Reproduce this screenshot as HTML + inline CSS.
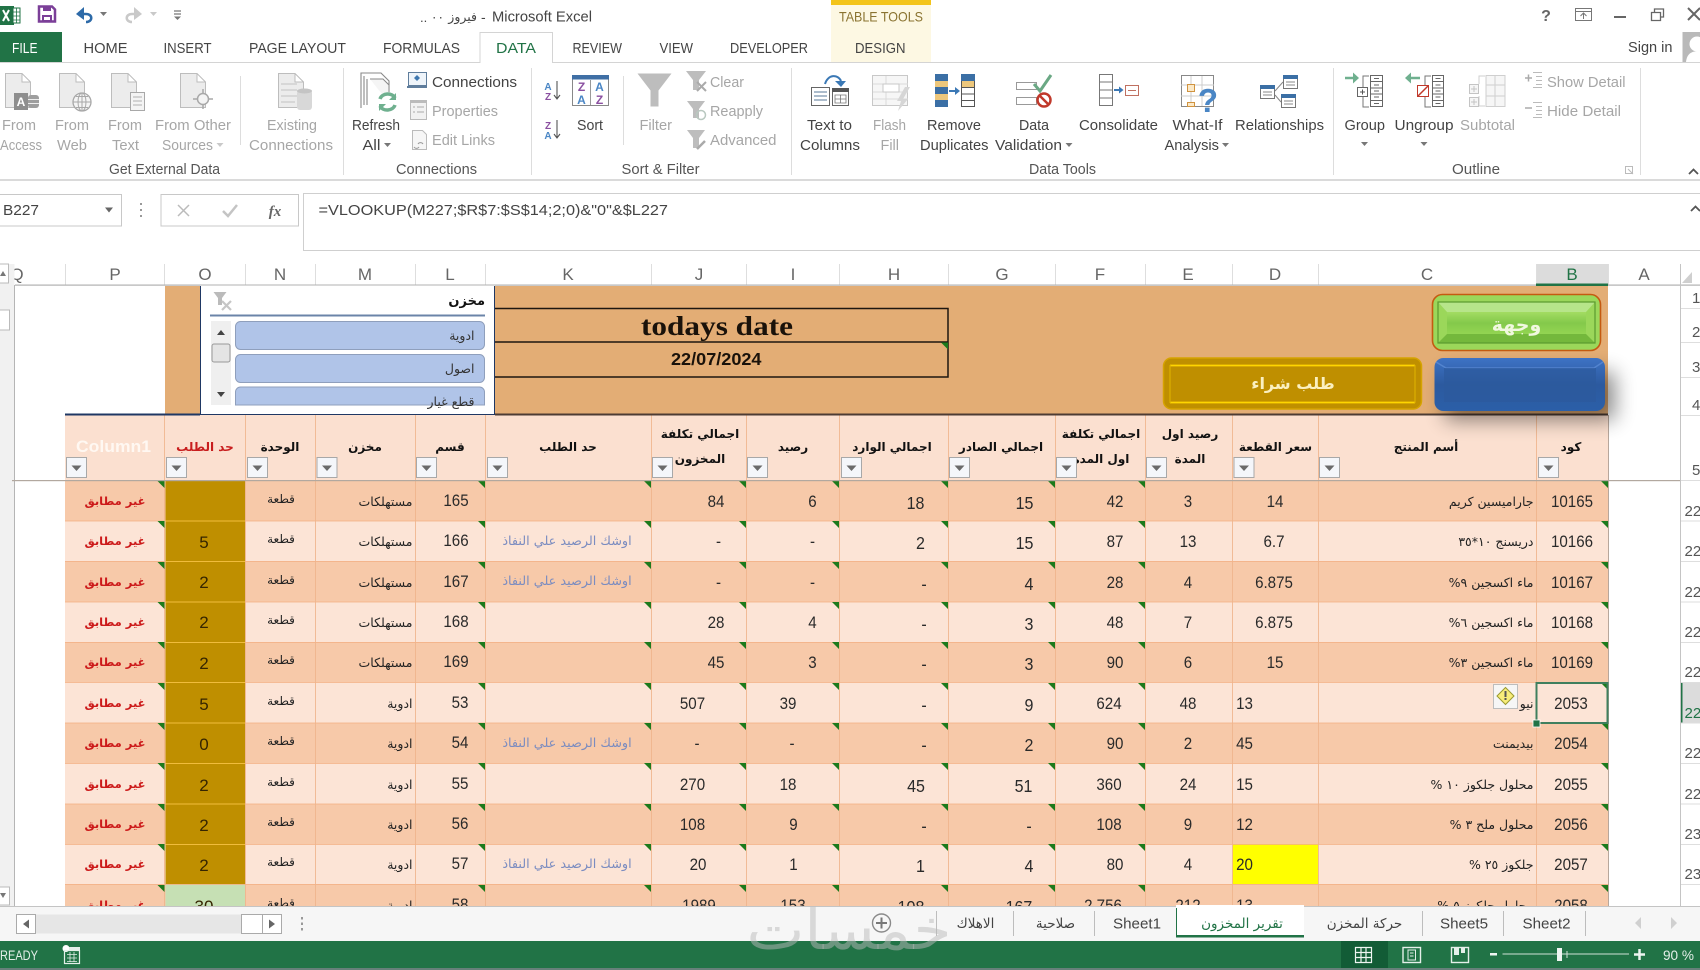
<!DOCTYPE html>
<html><head><meta charset="utf-8"><title>Microsoft Excel</title>
<style>
html,body{margin:0;padding:0;background:#fff;width:1700px;height:970px;overflow:hidden}
svg{display:block;filter:blur(.3px)}
text{font-family:"Liberation Sans","DejaVu Sans",sans-serif;white-space:pre}
.r{font-size:14.5px;fill:#444}
.g{font-size:14.5px;fill:#a6a6a6}
.t{font-size:15px;fill:#444}
.c{font-size:17px;fill:#666;text-anchor:middle}
.n{font-size:17px;fill:#2a2a2a;text-anchor:middle;transform:scaleX(.89);transform-box:fill-box;transform-origin:center}
.b{font-size:18px;fill:#2a2a2a;text-anchor:middle;transform:scaleX(.89);transform-box:fill-box;transform-origin:center}
.o{font-size:17px;fill:#352500;text-anchor:middle}
.a{font-family:"DejaVu Sans",sans-serif;font-size:12.5px;fill:#222;direction:rtl;text-anchor:start}
.m{font-family:"DejaVu Sans",sans-serif;font-size:12px;fill:#222;text-anchor:middle}
.h{font-family:"DejaVu Sans",sans-serif;font-size:12px;font-weight:bold;fill:#111;text-anchor:middle}
.w{font-family:"DejaVu Sans",sans-serif;font-size:11.5px;font-weight:bold;fill:#cc1a1a;text-anchor:middle}
.k{font-family:"DejaVu Sans",sans-serif;font-size:12.8px;fill:#7b8cc0;text-anchor:middle}
.q{font-size:15px;fill:#555}
</style></head><body>
<svg width="1700" height="970" viewBox="0 0 1700 970" xmlns="http://www.w3.org/2000/svg">
<defs>
<path id="pg" d="M.5.5H17L25.5 9V34.5H.5ZM17 .5V9H25.5" fill="#ececec" stroke="#bdbdbd"/>
<g id="dd"><rect x=".5" y=".5" width="20" height="20" fill="#f4f6fa" stroke="#a8a8a8"/><path d="M5.5 8.5h10l-5 5.5z" fill="#6a6a6a"/></g>
<path id="tr" d="M157.500 0h7v7zM478 0h7v7zM644 0h7v7zM739 0h7v7zM832 0h7v7zM941 0h7v7zM1048 0h7v7zM1138 0h7v7zM1601 0h7v7z" fill="#1c7a1c"/>
<path id="ar" d="M0 0h7l-3.500 4z" fill="#777"/>
<linearGradient id="bl" x1="0" y1="0" x2="0" y2="1"><stop offset="0" stop-color="#3d72c4"/><stop offset=".5" stop-color="#2c5a9f"/><stop offset="1" stop-color="#2b5fa8"/></linearGradient>
<linearGradient id="gr" x1="0" y1="0" x2="0" y2="1"><stop offset="0" stop-color="#a3dc62"/><stop offset=".5" stop-color="#84c94b"/><stop offset="1" stop-color="#93d552"/></linearGradient>
<filter id="sh" x="-30%" y="-80%" width="160%" height="260%"><feGaussianBlur stdDeviation="10"/></filter>
</defs>
<rect width="1700" height="970" fill="#fff"/>

<!-- title bar -->
<rect x="0" y="6" width="14" height="19" fill="#217346"/>
<path d="M3 10l6 11M9 10l-6 11" stroke="#fff" stroke-width="2"/>
<rect x="13" y="8" width="7" height="15" fill="#fff" stroke="#217346"/>
<path d="M13 12h7M13 16h7M13 20h7M16.500 8v15" stroke="#217346" stroke-width=".8"/>
<path d="M39 6.500h13l3 3v12H39z" fill="#fff" stroke="#7b3f98" stroke-width="2.500"/>
<rect x="43" y="6" width="8" height="5" fill="#7b3f98"/><rect x="42" y="15" width="10" height="6" fill="#7b3f98"/><rect x="44" y="17" width="6" height="3" fill="#fff"/>
<path d="M78 14h8c7 0 7 8 0 8" fill="none" stroke="#2d6aa8" stroke-width="2.500"/><path d="M84 7l-8 7 8 6z" fill="#2d6aa8"/>
<use href="#ar" x="100" y="12"/>
<path d="M140 14h-8c-7 0-7 8 0 8" fill="none" stroke="#c9c9c9" stroke-width="2.500"/><path d="M134 7l8 7-8 6z" fill="#c9c9c9"/>
<use href="#ar" x="150" y="12" opacity=".4"/>
<path d="M174 11h7M174 14h7" stroke="#777" stroke-width="1.200"/><path d="M174 16.500h7l-3.500 3.500z" fill="#777"/>
<text x="420" y="22" font-size="13" fill="#444">..</text>
<text x="437.500" y="21" style="font-family:'DejaVu Sans',sans-serif;font-size:12px;fill:#444;text-anchor:middle">٠٠</text>
<text x="477" y="21" style="font-family:'DejaVu Sans',sans-serif;font-size:12.500px;fill:#444;direction:rtl;text-anchor:start">فيروز</text>
<text x="481" y="22" font-size="14" fill="#444">-</text>
<text x="492" y="21.500" font-size="14.500" fill="#444" textLength="100" lengthAdjust="spacingAndGlyphs">Microsoft Excel</text>
<rect x="831" y="0" width="100" height="62" fill="#fdf8e3"/><rect x="831" y="0" width="100" height="5" fill="#f3c41a"/>
<text x="839" y="21.500" font-size="14" fill="#8a7330" textLength="84" lengthAdjust="spacingAndGlyphs">TABLE TOOLS</text>
<!-- window controls -->
<text x="1546" y="21" font-size="16" font-weight="bold" fill="#666" text-anchor="middle">?</text>
<rect x="1575.500" y="8.500" width="16" height="12" fill="none" stroke="#777"/><path d="M1575 11.500h17M1583.500 19v-6M1580.500 16l3-3 3 3" fill="none" stroke="#777"/>
<rect x="1614" y="16" width="12" height="2" fill="#666"/>
<path d="M1651.500 12.500h9v8h-9zM1654.500 12v-3h9v8h-3" fill="none" stroke="#666" stroke-width="1.300"/>
<path d="M1688 8l12 12M1700 8l-12 12" stroke="#666" stroke-width="2"/>

<!-- tabs -->
<rect x="0" y="32" width="62" height="31" fill="#217346"/>
<text x="12" y="53" font-size="15" fill="#fff" textLength="25.500" lengthAdjust="spacingAndGlyphs">FILE</text>
<path d="M0 62.500H480V32.500H552.500V62.500H1700" fill="none" stroke="#d4d4d4"/>
<text class="t" x="83.500" y="53" textLength="44" lengthAdjust="spacingAndGlyphs">HOME</text>
<text class="t" x="163.500" y="53" textLength="48" lengthAdjust="spacingAndGlyphs">INSERT</text>
<text class="t" x="249" y="53" textLength="97" lengthAdjust="spacingAndGlyphs">PAGE LAYOUT</text>
<text class="t" x="383" y="53" textLength="77" lengthAdjust="spacingAndGlyphs">FORMULAS</text>
<text class="t" x="496" y="53" textLength="40" lengthAdjust="spacingAndGlyphs" style="fill:#217346">DATA</text>
<text class="t" x="572.500" y="53" textLength="49.500" lengthAdjust="spacingAndGlyphs">REVIEW</text>
<text class="t" x="659.500" y="53" textLength="33.500" lengthAdjust="spacingAndGlyphs">VIEW</text>
<text class="t" x="730" y="53" textLength="78" lengthAdjust="spacingAndGlyphs">DEVELOPER</text>
<text class="t" x="855" y="53" textLength="50.500" lengthAdjust="spacingAndGlyphs">DESIGN</text>
<text class="t" x="1628" y="52" textLength="44.500" lengthAdjust="spacingAndGlyphs">Sign in</text>
<rect x="1682.500" y="32" width="18" height="30" fill="#b9b9b9"/><circle cx="1697" cy="44" r="7.500" fill="#fff"/><path d="M1686 62c1-9 6-11 14-11v11z" fill="#fff"/>

<!-- ribbon: external data -->
<use href="#pg" x="5" y="73"/><rect x="14" y="93" width="14" height="17" fill="#8e8e8e"/><text x="21" y="106" font-size="12" font-weight="bold" fill="#fff" text-anchor="middle">A</text><rect x="28" y="95" width="11" height="13" rx="3" fill="#9e9e9e"/><path d="M28 99.500h11M28 103.500h11" stroke="#eee"/>
<use href="#pg" x="59" y="73"/><circle cx="82" cy="102" r="9" fill="#f4f4f4" stroke="#a8a8a8" stroke-width="1.300"/><path d="M73 102h18M82 93v18M76 96.500h12M76 107.500h12" stroke="#a8a8a8" fill="none"/><ellipse cx="82" cy="102" rx="4" ry="9" fill="none" stroke="#a8a8a8"/>
<use href="#pg" x="111" y="73"/><rect x="130.500" y="92.500" width="14" height="18" fill="#f4f4f4" stroke="#a8a8a8"/><path d="M133 97h9M133 101h9M133 105h9" stroke="#b0b0b0"/>
<use href="#pg" x="180" y="73"/><circle cx="203" cy="99" r="5.500" fill="#f4f4f4" stroke="#a8a8a8" stroke-width="1.500"/><path d="M203 89v5M203 104v5M193 99h5M208 99h5" stroke="#a8a8a8" stroke-width="1.500"/>
<text class="g" x="2" y="130" textLength="34" lengthAdjust="spacingAndGlyphs">From</text><text class="g" x="0" y="150" textLength="42" lengthAdjust="spacingAndGlyphs">Access</text>
<text class="g" x="55" y="130" textLength="34" lengthAdjust="spacingAndGlyphs">From</text><text class="g" x="57" y="150" textLength="30" lengthAdjust="spacingAndGlyphs">Web</text>
<text class="g" x="108" y="130" textLength="34" lengthAdjust="spacingAndGlyphs">From</text><text class="g" x="112" y="150" textLength="27" lengthAdjust="spacingAndGlyphs">Text</text>
<text class="g" x="155" y="130" textLength="76" lengthAdjust="spacingAndGlyphs">From Other</text><text class="g" x="162" y="150" textLength="51" lengthAdjust="spacingAndGlyphs">Sources</text><use href="#ar" x="216.500" y="143" opacity=".4"/>
<path d="M240.500 76V145" stroke="#ddd"/>
<use href="#pg" x="278" y="73"/><path d="M281 84h16M281 90h16M281 96h16M281 102h14" stroke="#d0d0d0" stroke-width="1.500"/><rect x="297" y="90" width="15" height="20" rx="3" fill="#d8d8d8"/><ellipse cx="304.500" cy="91" rx="7.500" ry="2.500" fill="#c4c4c4"/>
<text class="g" x="267" y="130" textLength="50" lengthAdjust="spacingAndGlyphs">Existing</text><text class="g" x="249" y="150" textLength="84" lengthAdjust="spacingAndGlyphs">Connections</text>
<text class="r" x="109" y="174" textLength="111" lengthAdjust="spacingAndGlyphs" style="fill:#555">Get External Data</text>
<path d="M343.500 68V175" stroke="#ddd"/>
<!-- connections -->
<path d="M361 108V73h20l8 8v22M364 76v29M367 79v26" fill="none" stroke="#888" stroke-width="1.100"/><path d="M370 79h13l6 6v18" fill="#f5f5f5" stroke="#888"/>
<circle cx="387.500" cy="102" r="10" fill="#fff"/><path d="M380 99c2-6 12-7 15-1M395 105c-2 6-12 7-15 1" fill="none" stroke="#6fb08f" stroke-width="3.500"/><path d="M396 93v7h-7zM379 111v-7h7z" fill="#6fb08f"/>
<text class="r" x="352" y="130" textLength="48" lengthAdjust="spacingAndGlyphs">Refresh</text><text class="r" x="362.500" y="150" textLength="18" lengthAdjust="spacingAndGlyphs">All</text><use href="#ar" x="384" y="143"/>
<rect x="408.500" y="72.500" width="18" height="13" fill="#eef4fa" stroke="#5f7d9c"/><path d="M417 75l3 3-3 3-3-3z" fill="#3f78b0"/><path d="M407 87h20" stroke="#5f7d9c" stroke-width="2"/>
<rect x="410.500" y="100.500" width="16" height="19" fill="#f2f2f2" stroke="#bbb"/><rect x="410" y="100" width="17" height="3" fill="#bbb"/><path d="M413 107h2M417 107h7M413 112h2M417 112h7" stroke="#aaa"/>
<path d="M412.500 130.500h10l4 4v15h-14z" fill="#f6f6f6" stroke="#bbb"/><path d="M418 144a3 3 0 0 1 5 0M414 147a3 3 0 0 0 5 0" fill="none" stroke="#999"/>
<text class="r" x="432" y="87" textLength="85" lengthAdjust="spacingAndGlyphs">Connections</text>
<text class="g" x="432" y="116" textLength="66" lengthAdjust="spacingAndGlyphs">Properties</text>
<text class="g" x="432" y="145" textLength="63" lengthAdjust="spacingAndGlyphs">Edit Links</text>
<text class="r" x="396" y="174" textLength="81" lengthAdjust="spacingAndGlyphs" style="fill:#555">Connections</text>
<path d="M531.500 68V175" stroke="#ddd"/>
<!-- sort -->
<text x="548" y="90" font-size="10" font-weight="bold" fill="#4a86c5" text-anchor="middle">A</text><text x="548" y="100" font-size="10" font-weight="bold" fill="#8a4fa0" text-anchor="middle">Z</text>
<path d="M557 81v18M554 95l3 4 3-4" fill="none" stroke="#555" stroke-width="1.100"/>
<text x="548" y="129" font-size="10" font-weight="bold" fill="#8a4fa0" text-anchor="middle">Z</text><text x="548" y="139" font-size="10" font-weight="bold" fill="#4a86c5" text-anchor="middle">A</text>
<path d="M557 120v18M554 134l3 4 3-4" fill="none" stroke="#555" stroke-width="1.100"/>
<rect x="572.500" y="75.500" width="36" height="30" fill="#fff" stroke="#888"/><rect x="572" y="75" width="37" height="4.500" fill="#3f6fa5"/><path d="M590.500 80v25" stroke="#999"/>
<text x="581.500" y="91" font-size="12" font-weight="bold" fill="#8a4fa0" text-anchor="middle">Z</text><text x="581.500" y="104" font-size="12" font-weight="bold" fill="#4a86c5" text-anchor="middle">A</text>
<text x="599.500" y="91" font-size="12" font-weight="bold" fill="#4a86c5" text-anchor="middle">A</text><text x="599.500" y="104" font-size="12" font-weight="bold" fill="#8a4fa0" text-anchor="middle">Z</text>
<text class="r" x="577" y="130" textLength="26" lengthAdjust="spacingAndGlyphs">Sort</text>
<path d="M623.500 76V145" stroke="#ddd"/>
<path d="M637.500 73.500h34l-13 17v16h-8v-16z" fill="#bdbdbd"/>
<path d="M686 71h20l-7 9v10h-6V80z" fill="#bdbdbd"/><path d="M697 82l9 9M706 82l-9 9" stroke="#aaa" stroke-width="2"/>
<path d="M687 101h18l-6 8v9h-6v-9z" fill="#bdbdbd"/><circle cx="701" cy="115" r="4.500" fill="none" stroke="#b9c8c0" stroke-width="1.500"/>
<path d="M687 130h18l-6 8v10h-6v-10z" fill="#bdbdbd"/><path d="M697 149l8-8" stroke="#aaa" stroke-width="2.500"/>
<text class="g" x="639.500" y="130" textLength="32.500" lengthAdjust="spacingAndGlyphs">Filter</text>
<text class="g" x="710" y="87" textLength="34" lengthAdjust="spacingAndGlyphs">Clear</text>
<text class="g" x="710" y="116" textLength="53" lengthAdjust="spacingAndGlyphs">Reapply</text>
<text class="g" x="710" y="145" textLength="66.500" lengthAdjust="spacingAndGlyphs">Advanced</text>
<text class="r" x="621.500" y="174" textLength="78" lengthAdjust="spacingAndGlyphs" style="fill:#555">Sort &amp; Filter</text>
<path d="M791.500 68V175" stroke="#ddd"/>
<!-- data tools -->
<rect x="811.500" y="87.500" width="18" height="18" fill="#fff" stroke="#666"/><path d="M814 92h13M814 96h13M814 100h13" stroke="#5a7a9a"/>
<rect x="832.500" y="88.500" width="16" height="17" fill="#fff" stroke="#666"/><rect x="832" y="88" width="17" height="4" fill="#555"/><path d="M835 95h11v8h-11zM840.500 95v8M835 99h11" fill="none" stroke="#777" stroke-width=".8"/>
<path d="M825 84c3-10 13-10 16-3" fill="none" stroke="#3a78b5" stroke-width="2"/><path d="M835 81h11l-5 6z" fill="#3a78b5"/>
<text class="r" x="807" y="130" textLength="45" lengthAdjust="spacingAndGlyphs">Text to</text><text class="r" x="800" y="150" textLength="60" lengthAdjust="spacingAndGlyphs">Columns</text>
<rect x="872.500" y="75.500" width="35" height="30" fill="#f6f6f6" stroke="#c8c8c8"/><path d="M873 84h35M873 92h35M873 99h35M886 76v29" stroke="#dadada"/><rect x="883" y="84" width="16" height="8" fill="#fff" stroke="#c8c8c8"/><path d="M905 87l5 0-7 12 5 0-10 12 3-10-4 0z" fill="#d6d6d6"/>
<text class="g" x="873" y="130" textLength="33" lengthAdjust="spacingAndGlyphs">Flash</text><text class="g" x="880.500" y="150" textLength="18.500" lengthAdjust="spacingAndGlyphs">Fill</text>
<rect x="935" y="74" width="13" height="33" fill="#3b6fa5"/><rect x="935" y="81" width="13" height="6" fill="#edc77c"/><rect x="935" y="94" width="13" height="6" fill="#edc77c"/>
<rect x="961.500" y="74.500" width="13" height="32" fill="#fff" stroke="#555"/><rect x="961" y="74" width="14" height="7" fill="#3b6fa5"/><rect x="962" y="81" width="12" height="6" fill="#edc77c"/><path d="M962 87.500h12M962 94h12M962 100.500h12" stroke="#555"/>
<path d="M949 91h8" stroke="#3b78b5" stroke-width="2"/><path d="M955 87l5 4-5 4z" fill="#3b78b5"/>
<text class="r" x="927" y="130" textLength="54" lengthAdjust="spacingAndGlyphs">Remove</text><text class="r" x="920" y="150" textLength="68.500" lengthAdjust="spacingAndGlyphs">Duplicates</text>
<rect x="1016.500" y="82.500" width="20" height="7" fill="#fff" stroke="#999"/><rect x="1016.500" y="97.500" width="20" height="7" fill="#fff" stroke="#999"/>
<path d="M1034 84l6 7 11-16" fill="none" stroke="#6aa884" stroke-width="3"/>
<circle cx="1044" cy="100" r="6.500" fill="#fff" stroke="#c0392b" stroke-width="2.500"/><path d="M1039.500 95.500l9 9" stroke="#c0392b" stroke-width="2.500"/>
<text class="r" x="1019" y="130" textLength="30" lengthAdjust="spacingAndGlyphs">Data</text><text class="r" x="995" y="150" textLength="67" lengthAdjust="spacingAndGlyphs">Validation</text><use href="#ar" x="1065.500" y="143"/>
<rect x="1099.500" y="74.500" width="13" height="31" fill="#fff" stroke="#777"/><path d="M1100 82h12M1100 90h12M1100 98h12" stroke="#777"/>
<path d="M1114 90h7" stroke="#3b78b5" stroke-width="2"/><path d="M1119 86.500l4.500 3.500-4.500 3.500z" fill="#3b78b5"/>
<rect x="1125.500" y="85.500" width="13" height="10" fill="#fff" stroke="#c07060"/><path d="M1128 90.500h8" stroke="#c07060"/>
<text class="r" x="1079" y="130" textLength="79" lengthAdjust="spacingAndGlyphs">Consolidate</text>
<text class="r" x="1029" y="174" textLength="67" lengthAdjust="spacingAndGlyphs" style="fill:#555">Data Tools</text>
<rect x="1181.500" y="75.500" width="32" height="31" fill="#fff" stroke="#888"/><path d="M1181 85h33M1181 96h33M1191 76v30M1202 76v30" stroke="#ccc"/><rect x="1187.500" y="84.500" width="7" height="7" fill="#fbe9c8" stroke="#d0933f"/><rect x="1187.500" y="102.500" width="7" height="4" fill="#fbe9c8" stroke="#d0933f"/>
<text x="1208" y="112" font-size="33" font-weight="bold" fill="#4a86c5" text-anchor="middle">?</text>
<text class="r" x="1172.500" y="130" textLength="50" lengthAdjust="spacingAndGlyphs">What-If</text><text class="r" x="1164.500" y="150" textLength="54.500" lengthAdjust="spacingAndGlyphs">Analysis</text><use href="#ar" x="1222" y="143"/>
<path d="M1275 91l8-9M1275 95l6 7" stroke="#888" fill="none"/>
<rect x="1260.500" y="85.500" width="14" height="13" fill="#fff" stroke="#777"/><rect x="1260" y="85" width="15" height="4" fill="#3b6fa5"/><path d="M1263 92h9M1263 95h9" stroke="#888"/>
<rect x="1283.500" y="75.500" width="14" height="13" fill="#fff" stroke="#777"/><rect x="1283" y="75" width="15" height="4" fill="#3b6fa5"/><path d="M1286 82h9M1286 85h9" stroke="#888"/>
<rect x="1281.500" y="94.500" width="14" height="13" fill="#fff" stroke="#777"/><rect x="1281" y="94" width="15" height="4" fill="#3b6fa5"/><path d="M1284 101h9M1284 104h9" stroke="#888"/>
<text class="r" x="1235" y="130" textLength="89" lengthAdjust="spacingAndGlyphs">Relationships</text>
<path d="M1333.500 68V175" stroke="#ddd"/>
<!-- outline -->
<path d="M1345 78h11" stroke="#6fb08f" stroke-width="2.500"/><path d="M1353 72.500l6 5.500-6 5.500z" fill="#6fb08f"/>
<path d="M1369 76h-6v11M1363 96v11h6" fill="none" stroke="#777"/><rect x="1357.500" y="87.500" width="10" height="9" fill="#fff" stroke="#666"/><path d="M1360 92h5M1362.500 89.500v5" stroke="#555"/>
<rect x="1370.500" y="75.500" width="12" height="31" fill="#fff" stroke="#666"/><path d="M1371 81.500h11M1371 88h11M1371 94h11M1371 100.500h11M1374 78.500h5M1374 85h5M1374 91h5M1374 97h5M1374 103.500h5" stroke="#666"/>
<path d="M1409 78h11" stroke="#6fb08f" stroke-width="2.500"/><path d="M1411 72.500l-6 5.500 6 5.500z" fill="#6fb08f"/>
<path d="M1431 76h-6v9M1425 97v10h6" fill="none" stroke="#777"/><rect x="1417.500" y="85.500" width="11" height="11" fill="#fff" stroke="#c0392b"/><path d="M1418 96l10-10" stroke="#c0392b" stroke-width="1.500"/>
<rect x="1432.500" y="75.500" width="11" height="31" fill="#fff" stroke="#666"/><path d="M1433 81.500h10M1433 88h10M1433 94h10M1433 100.500h10M1435.500 78.500h5M1435.500 85h5M1435.500 91h5M1435.500 97h5M1435.500 103.500h5" stroke="#666"/>
<text class="r" x="1344.500" y="130" textLength="40.500" lengthAdjust="spacingAndGlyphs">Group</text><use href="#ar" x="1361" y="142"/>
<text class="r" x="1394.500" y="130" textLength="59" lengthAdjust="spacingAndGlyphs">Ungroup</text><use href="#ar" x="1420.500" y="142"/>
<text class="g" x="1460" y="130" textLength="55" lengthAdjust="spacingAndGlyphs">Subtotal</text>
<path d="M1486 75.500h19v31h-19zM1486 85h19M1486 96h19M1495 76v30" fill="#f6f6f6" stroke="#cfcfcf"/><path d="M1485 76h-6v8M1479 96v10h6" fill="none" stroke="#cfcfcf"/>
<rect x="1469.500" y="84.500" width="9" height="9" fill="#f6f6f6" stroke="#c4c4c4"/><rect x="1469.500" y="97.500" width="9" height="9" fill="#f6f6f6" stroke="#c4c4c4"/><path d="M1471 89h6M1474 86v6M1471 102h6M1474 99v6" stroke="#c4c4c4"/>
<path d="M1525 78h7M1528.500 74.500v7" stroke="#aaa" stroke-width="1.500"/><path d="M1533 72.500h9M1536 76.500h6M1536 80.500h6M1536 84.500h6M1533 87.500h9" stroke="#bbb"/>
<path d="M1525 108h7" stroke="#aaa" stroke-width="1.500"/><path d="M1533 102.500h9M1536 106.500h6M1536 110.500h6M1536 114.500h6M1533 117.500h9" stroke="#bbb"/>
<text class="g" x="1547" y="87" textLength="78.500" lengthAdjust="spacingAndGlyphs">Show Detail</text>
<text class="g" x="1547" y="116" textLength="74" lengthAdjust="spacingAndGlyphs">Hide Detail</text>
<text class="r" x="1452" y="174" textLength="48" lengthAdjust="spacingAndGlyphs" style="fill:#555">Outline</text>
<path d="M1625.500 166.500h7v7h-7zM1628 169l5 5" fill="none" stroke="#bbb"/>
<path d="M1640.500 68V175" stroke="#ddd"/>
<path d="M1689 174l4.500-4.500 4.500 4.500" fill="none" stroke="#555" stroke-width="1.800"/>
<rect x="0" y="179" width="1700" height="2" fill="#dadada"/>

<!-- formula bar -->
<path d="M303.500 250.500V193.500H1700M303 250.500H1700" fill="none" stroke="#cfcfcf"/>
<rect x="-1" y="194.500" width="122.500" height="31.500" fill="#fff" stroke="#c8c8c8"/>
<rect x="161" y="194.500" width="137.500" height="31.500" fill="#fff" stroke="#c8c8c8"/>
<text x="3" y="215" font-size="15" fill="#444" textLength="36" lengthAdjust="spacingAndGlyphs">B227</text>
<path d="M105 207.500h8l-4 5z" fill="#666"/>
<path d="M141 203v2M141 209v2M141 215v2" stroke="#999" stroke-width="2"/>
<path d="M178 205l11 11M189 205l-11 11" stroke="#bbb" stroke-width="1.500"/>
<path d="M223 211l5 5 9-11" fill="none" stroke="#c4c4c4" stroke-width="2.500"/>
<text x="275" y="216" font-size="15" font-style="italic" font-weight="bold" fill="#666" text-anchor="middle" style="font-family:'Liberation Serif',serif">fx</text>
<text x="318.500" y="215" font-size="15" fill="#444" textLength="349.500" lengthAdjust="spacingAndGlyphs">=VLOOKUP(M227;$R$7:$S$14;2;0)&amp;"0"&amp;$L227</text>
<path d="M1691 211l4.500-4.500 4.500 4.500" fill="none" stroke="#555" stroke-width="1.800"/>

<!-- column headers -->
<rect x="1536" y="264" width="72" height="21" fill="#dcdcdc"/>
<path d="M65.500 264V285M164.500 264V285M245.500 264V285M315.500 264V285M415.500 264V285M485.500 264V285M651.500 264V285M746.500 264V285M839.500 264V285M948.500 264V285M1055.500 264V285M1145.500 264V285M1232.500 264V285M1318.500 264V285M1536.500 264V285M1608.500 264V285M1680.500 264V285" stroke="#dedede"/>
<g class="cl">
<text class="c" x="17" y="280">Q</text><text class="c" x="115" y="280">P</text><text class="c" x="205" y="280">O</text><text class="c" x="280" y="280">N</text><text class="c" x="365" y="280">M</text><text class="c" x="450" y="280">L</text><text class="c" x="568" y="280">K</text><text class="c" x="699" y="280">J</text><text class="c" x="793" y="280">I</text><text class="c" x="894" y="280">H</text><text class="c" x="1002" y="280">G</text><text class="c" x="1100" y="280">F</text><text class="c" x="1188" y="280">E</text><text class="c" x="1275" y="280">D</text><text class="c" x="1427" y="280">C</text><text class="c" x="1572" y="280" style="fill:#217346">B</text><text class="c" x="1644" y="280">A</text>
</g>
<path d="M1682 283h10v-11z" fill="#cfcfcf"/>
<rect x="15" y="284.500" width="1685" height="1.200" fill="#b0b0b0"/>
<rect x="1536" y="283.500" width="72" height="2.500" fill="#217346"/>

<!-- left gutter -->
<rect x="0" y="264" width="14.500" height="642" fill="#f1f1f1"/>
<rect x="-1" y="264" width="9.500" height="19" fill="#fff" stroke="#bbb"/><path d="M0 276l3-5 3 5z" fill="#777"/>
<rect x="-1" y="310" width="10.500" height="20" fill="#fff" stroke="#bbb"/>
<rect x="-1" y="887" width="10.500" height="18" fill="#fff" stroke="#bbb"/><path d="M0 893h6l-3 5z" fill="#777"/>
<path d="M14.500 285V906" stroke="#b5b5b5"/>

<!-- banner -->
<rect x="165" y="286" width="1443" height="129" fill="#e3ad75"/>

<!-- header row -->
<rect x="65" y="415" width="1543" height="66" fill="#fbe0d0"/>

<!-- data rows -->
<rect x="65" y="481" width="1543" height="40" fill="#f7c9a9"/>
<rect x="65" y="521" width="1543" height="40" fill="#fce4d6"/>
<rect x="65" y="561" width="1543" height="41" fill="#f7c9a9"/>
<rect x="65" y="602" width="1543" height="40" fill="#fce4d6"/>
<rect x="65" y="642" width="1543" height="40" fill="#f7c9a9"/>
<rect x="65" y="682" width="1543" height="41" fill="#fce4d6"/>
<rect x="65" y="723" width="1543" height="40" fill="#f7c9a9"/>
<rect x="65" y="763" width="1543" height="41" fill="#fce4d6"/>
<rect x="65" y="804" width="1543" height="40" fill="#f7c9a9"/>
<rect x="65" y="844" width="1543" height="40" fill="#fce4d6"/>
<rect x="65" y="884" width="1543" height="22" fill="#f7c9a9"/>
<rect x="165.500" y="481" width="79.500" height="403" fill="#bf8f00"/>
<rect x="165.500" y="884" width="79.500" height="22" fill="#c6e0b4"/>
<rect x="1232.500" y="844" width="85.500" height="40" fill="#ffff00"/>
<path d="M65 521H1608M65 561.500H1608M65 602H1608M65 642.500H1608M65 682.500H1608M65 723H1608M65 763.500H1608M65 804H1608M65 844.500H1608M65 884.500H1608" stroke="#f2b084" stroke-opacity=".8"/>
<path d="M165.500 521H245M165.500 561.500H245M165.500 602H245M165.500 642.500H245M165.500 682.500H245M165.500 723H245M165.500 763.500H245M165.500 804H245M165.500 844.500H245" stroke="#f0bc3c"/>
<path d="M164.500 415V906M245.500 415V906M315.500 415V906M415.500 415V906M485.500 415V906M651.500 415V906M746.500 415V906M839.500 415V906M948.500 415V906M1055.500 415V906M1145.500 415V906M1232.500 415V906M1318.500 415V906M1536.500 415V906" stroke="#efb48c" stroke-opacity=".85"/>
<path d="M1608.500 415V906" stroke="#b7a79c"/>
<use href="#tr" y="481"/><use href="#tr" y="521"/><use href="#tr" y="562"/><use href="#tr" y="602"/><use href="#tr" y="642"/><use href="#tr" y="683"/><use href="#tr" y="723"/><use href="#tr" y="763"/><use href="#tr" y="804"/><use href="#tr" y="844"/><use href="#tr" y="885"/>
<rect x="12" y="480" width="1688" height="1.200" fill="#b2a89f"/>

<!-- header labels -->
<text x="113.500" y="452" font-size="17" font-weight="bold" fill="#fff8f2" text-anchor="middle" textLength="75" lengthAdjust="spacingAndGlyphs">Column1</text>
<text class="h" x="205" y="451" style="fill:#c81e1e">حد الطلب</text>
<text class="h" x="280" y="451">الوحدة</text>
<text class="h" x="365" y="451">مخزن</text>
<text class="h" x="450" y="451">قسم</text>
<text class="h" x="568" y="451">حد الطلب</text>
<text class="h" x="700" y="438">اجمالي تكلفة</text><text class="h" x="700" y="463">المخزون</text>
<text class="h" x="793" y="451">رصيد</text>
<text class="h" x="892" y="451">اجمالي الوارد</text>
<text class="h" x="1001" y="451">اجمالي الصادر</text>
<text class="h" x="1101" y="438">اجمالي تكلفة</text><text class="h" x="1101" y="463">اول المدة</text>
<text class="h" x="1190" y="438">رصيد اول</text><text class="h" x="1190" y="463">المدة</text>
<text class="h" x="1275.500" y="451">سعر القطعة</text>
<text class="h" x="1426" y="451">أسم المنتج</text>
<text class="h" x="1571" y="451">كود</text>
<use href="#dd" x="66" y="457"/><use href="#dd" x="166" y="457"/><use href="#dd" x="247" y="457"/><use href="#dd" x="316.500" y="457"/><use href="#dd" x="416" y="457"/><use href="#dd" x="487" y="457"/><use href="#dd" x="652" y="457"/><use href="#dd" x="747" y="457"/><use href="#dd" x="841" y="457"/><use href="#dd" x="949" y="457"/><use href="#dd" x="1056" y="457"/><use href="#dd" x="1146" y="457"/><use href="#dd" x="1233.500" y="457"/><use href="#dd" x="1319" y="457"/><use href="#dd" x="1538" y="457"/>

<!-- P col -->
<text class="w" x="115" y="505">غير مطابق</text><text class="w" x="115" y="545">غير مطابق</text><text class="w" x="115" y="586">غير مطابق</text><text class="w" x="115" y="626">غير مطابق</text><text class="w" x="115" y="666">غير مطابق</text><text class="w" x="115" y="707">غير مطابق</text><text class="w" x="115" y="747">غير مطابق</text><text class="w" x="115" y="788">غير مطابق</text><text class="w" x="115" y="828">غير مطابق</text><text class="w" x="115" y="868">غير مطابق</text><text class="w" x="115" y="909">غير مطابق</text>
<!-- O col -->
<text class="o" x="204" y="548">5</text><text class="o" x="204" y="588">2</text><text class="o" x="204" y="628">2</text><text class="o" x="204" y="669">2</text><text class="o" x="204" y="710">5</text><text class="o" x="204" y="750">0</text><text class="o" x="204" y="791">2</text><text class="o" x="204" y="831">2</text><text class="o" x="204" y="871">2</text><text class="o" x="204" y="912">30</text>
<!-- N col -->
<text class="m" x="281" y="503">قطعة</text><text class="m" x="281" y="543">قطعة</text><text class="m" x="281" y="584">قطعة</text><text class="m" x="281" y="624">قطعة</text><text class="m" x="281" y="664">قطعة</text><text class="m" x="281" y="705">قطعة</text><text class="m" x="281" y="745">قطعة</text><text class="m" x="281" y="786">قطعة</text><text class="m" x="281" y="826">قطعة</text><text class="m" x="281" y="866">قطعة</text><text class="m" x="281" y="907">قطعة</text>
<!-- M col -->
<text class="a" x="412.500" y="506">مستهلكات</text><text class="a" x="412.500" y="546">مستهلكات</text><text class="a" x="412.500" y="587">مستهلكات</text><text class="a" x="412.500" y="627">مستهلكات</text><text class="a" x="412.500" y="667">مستهلكات</text>
<text class="a" x="412.500" y="708">ادوية</text><text class="a" x="412.500" y="748">ادوية</text><text class="a" x="412.500" y="789">ادوية</text><text class="a" x="412.500" y="829">ادوية</text><text class="a" x="412.500" y="869">ادوية</text><text class="a" x="412.500" y="910">ادوية</text>
<!-- L col -->
<text class="n" x="456" y="506">165</text><text class="n" x="456" y="546">166</text><text class="n" x="456" y="587">167</text><text class="n" x="456" y="627">168</text><text class="n" x="456" y="667">169</text><text class="n" x="460" y="708">53</text><text class="n" x="460" y="748">54</text><text class="n" x="460" y="789">55</text><text class="n" x="460" y="829">56</text><text class="n" x="460" y="869">57</text><text class="n" x="460" y="910">58</text>
<!-- K col -->
<text class="k" x="567" y="545">اوشك الرصيد علي النفاذ</text><text class="k" x="567" y="585">اوشك الرصيد علي النفاذ</text><text class="k" x="567" y="747">اوشك الرصيد علي النفاذ</text><text class="k" x="567" y="868">اوشك الرصيد علي النفاذ</text>
<!-- J col -->
<text class="n" x="716" y="507">84</text><text class="n" x="718.500" y="547">-</text><text class="n" x="718.500" y="588">-</text><text class="n" x="716" y="628">28</text><text class="n" x="716" y="668">45</text><text class="n" x="692.500" y="709">507</text><text class="n" x="697" y="749">-</text><text class="n" x="692.500" y="790">270</text><text class="n" x="692.500" y="830">108</text><text class="n" x="698" y="870">20</text><text class="n" x="699" y="911">1989</text>
<!-- I col -->
<text class="n" x="812.500" y="507">6</text><text class="n" x="812.500" y="547">-</text><text class="n" x="812.500" y="588">-</text><text class="n" x="812.500" y="628">4</text><text class="n" x="812.500" y="668">3</text><text class="n" x="788" y="709">39</text><text class="n" x="792" y="749">-</text><text class="n" x="788" y="790">18</text><text class="n" x="793.500" y="830">9</text><text class="n" x="793.500" y="870">1</text><text class="n" x="793" y="911">153</text>
<!-- H col -->
<text class="b" x="915.500" y="509">18</text><text class="b" x="920.500" y="549">2</text><text class="b" x="924" y="590">-</text><text class="b" x="924" y="630">-</text><text class="b" x="924" y="670">-</text><text class="b" x="924" y="711">-</text><text class="b" x="924" y="751">-</text><text class="b" x="916" y="792">45</text><text class="b" x="924" y="832">-</text><text class="b" x="920.500" y="872">1</text><text class="b" x="911" y="913">108</text>
<!-- G col -->
<text class="b" x="1024.500" y="509">15</text><text class="b" x="1024.500" y="549">15</text><text class="b" x="1029" y="590">4</text><text class="b" x="1029" y="630">3</text><text class="b" x="1029" y="670">3</text><text class="b" x="1029" y="711">9</text><text class="b" x="1029" y="751">2</text><text class="b" x="1023.500" y="792">51</text><text class="b" x="1029" y="832">-</text><text class="b" x="1029" y="872">4</text><text class="b" x="1019" y="913">167</text>
<!-- F col -->
<text class="n" x="1115" y="507">42</text><text class="n" x="1115" y="547">87</text><text class="n" x="1115" y="588">28</text><text class="n" x="1115" y="628">48</text><text class="n" x="1115" y="668">90</text><text class="n" x="1109" y="709">624</text><text class="n" x="1115" y="749">90</text><text class="n" x="1109" y="790">360</text><text class="n" x="1109" y="830">108</text><text class="n" x="1115" y="870">80</text><text class="n" x="1103" y="911">2,756</text>
<!-- E col -->
<text class="n" x="1188" y="507">3</text><text class="n" x="1188" y="547">13</text><text class="n" x="1188" y="588">4</text><text class="n" x="1188" y="628">7</text><text class="n" x="1188" y="668">6</text><text class="n" x="1188" y="709">48</text><text class="n" x="1188" y="749">2</text><text class="n" x="1188" y="790">24</text><text class="n" x="1188" y="830">9</text><text class="n" x="1188" y="870">4</text><text class="n" x="1188" y="911">212</text>
<!-- D col -->
<text class="n" x="1275" y="507">14</text><text class="n" x="1274" y="547">6.7</text><text class="n" x="1274" y="588">6.875</text><text class="n" x="1274" y="628">6.875</text><text class="n" x="1275" y="668">15</text>
<text class="n" x="1244.500" y="709">13</text><text class="n" x="1244.500" y="749">45</text><text class="n" x="1244.500" y="790">15</text><text class="n" x="1244.500" y="830">12</text><text class="n" x="1244.500" y="870">20</text><text class="n" x="1244.500" y="911">13</text>
<!-- C col -->
<text class="a" x="1533.500" y="506">جاراميسين كريم</text>
<text class="a" x="1533.500" y="546">دريسنج ١٠*٣٥</text>
<text class="a" x="1533.500" y="587">ماء اكسجين ٩%</text>
<text class="a" x="1533.500" y="627">ماء اكسجين ٦%</text>
<text class="a" x="1533.500" y="667">ماء اكسجين ٣%</text>
<text class="a" x="1533.500" y="708">نيو</text>
<text class="a" x="1533.500" y="748">بيديمنت</text>
<text class="a" x="1533.500" y="789">محلول جلكوز ١٠ %</text>
<text class="a" x="1533.500" y="829">محلول ملح ٣ %</text>
<text class="a" x="1533.500" y="869">جلكوز ٢٥ %</text>
<text class="a" x="1533.500" y="910">محلول جلكوز ٥ %</text>
<!-- B col -->
<text class="n" x="1572" y="507">10165</text><text class="n" x="1572" y="547">10166</text><text class="n" x="1572" y="588">10167</text><text class="n" x="1572" y="628">10168</text><text class="n" x="1572" y="668">10169</text><text class="n" x="1571" y="709">2053</text><text class="n" x="1571" y="749">2054</text><text class="n" x="1571" y="790">2055</text><text class="n" x="1571" y="830">2056</text><text class="n" x="1571" y="870">2057</text><text class="n" x="1571" y="911">2058</text>
<!-- selection -->
<rect x="1536.500" y="683" width="71" height="40" fill="none" stroke="#3f7f5e" stroke-width="2"/>
<rect x="1533" y="720" width="7" height="7" fill="#217346" stroke="#fff" stroke-width=".8"/>
<rect x="1493.500" y="684.500" width="24" height="24" fill="#f6f6f6" stroke="#bdbdbd"/>
<path d="M1505.500 687.500l8.500 8.500-8.500 8.500-8.500-8.500z" fill="#f7ec7a" stroke="#9a9a30"/><rect x="1504.500" y="691" width="2" height="6" fill="#555"/><rect x="1504.500" y="698" width="2" height="2" fill="#555"/>

<!-- banner overlays -->
<rect x="65" y="413.500" width="135" height="2" fill="#1f3864"/>
<rect x="495" y="413.500" width="1113" height="2" fill="#4d3c34"/>
<path d="M495 308.500H948V377H495M495 342H948" fill="none" stroke="#1e1710" stroke-width="1.500"/>
<path d="M941 342.500h7v7z" fill="#1c7a1c"/>
<text x="641" y="335" font-size="27" font-weight="bold" fill="#1a120a" textLength="152" lengthAdjust="spacingAndGlyphs" style="font-family:'Liberation Serif',serif">todays date</text>
<text x="671" y="365" font-size="17.500" font-weight="bold" fill="#1a120a" textLength="90.500" lengthAdjust="spacingAndGlyphs">22/07/2024</text>

<!-- slicer -->
<rect x="200" y="285.500" width="295" height="129" fill="#fff"/>
<path d="M200.500 286V414.500H494.500V286" fill="none" stroke="#1f3864"/>
<text x="485" y="305" style="font-family:'DejaVu Sans',sans-serif;font-size:13px;font-weight:bold;fill:#111;direction:rtl;text-anchor:start">مخزن</text>
<path d="M213.500 292h13l-4.500 6v7h-4v-7z" fill="#bbb"/><path d="M222 301l9 9M231 301l-9 9" stroke="#c6c6c6" stroke-width="2.200"/>
<rect x="210" y="314.500" width="275" height="2" fill="#6b84a8"/>
<rect x="211" y="321" width="20" height="84" fill="#efefef"/>
<path d="M217 335l4-5 4 5z" fill="#444"/><path d="M217 392h8l-4 5z" fill="#444"/>
<rect x="212" y="344" width="18" height="18" rx="2" fill="#e4e4e4" stroke="#999"/>
<rect x="235.500" y="321.500" width="249" height="28" rx="5" fill="#b0c4e8" stroke="#8f9fbc"/>
<rect x="235.500" y="354.500" width="249" height="28" rx="5" fill="#b0c4e8" stroke="#8f9fbc"/>
<path d="M235.500 405V392a5 5 0 0 1 5-5H479.500a5 5 0 0 1 5 5V405Z" fill="#b0c4e8" stroke="#8f9fbc"/>
<text x="474.500" y="340" style="font-family:'DejaVu Sans',sans-serif;font-size:12.500px;fill:#333;direction:rtl;text-anchor:start">ادوية</text>
<text x="474.500" y="373" style="font-family:'DejaVu Sans',sans-serif;font-size:12.500px;fill:#333;direction:rtl;text-anchor:start">اصول</text>
<svg x="235" y="388" width="250" height="17"><text x="239.500" y="18" style="font-family:'DejaVu Sans',sans-serif;font-size:12.500px;fill:#333;direction:rtl;text-anchor:start">قطع غيار</text></svg>

<!-- buttons -->
<rect x="1432.500" y="294.500" width="168" height="56" rx="10" fill="#9bd75a" stroke="#c55a11" stroke-width="1.600"/>
<path d="M1438 302H1595L1586 312H1447Z" fill="#b7e58a"/><path d="M1438 343H1595L1586 334H1447Z" fill="#74b83c"/>
<rect x="1438" y="302" width="157" height="41" fill="none" stroke="#5a9a2e" stroke-width="1.200"/>
<rect x="1447" y="312" width="139" height="22" fill="url(#gr)"/>
<text x="1516.500" y="331" style="font-family:'DejaVu Sans',sans-serif;font-size:19px;font-weight:bold;fill:#f1f8df;text-anchor:middle">وجهة</text>
<rect x="1445" y="372" width="170" height="48" fill="#000" opacity=".45" filter="url(#sh)"/>
<rect x="1434.500" y="358" width="170.500" height="53" rx="9" fill="url(#bl)"/>
<path d="M1436 362l10 6H1594l9-6" fill="none" stroke="#5f8fd8" stroke-width="1.500" opacity=".7"/>
<path d="M1444 368H1596V402H1444Z" fill="#2c5a9c" opacity=".7"/>
<rect x="1163.500" y="358" width="258" height="51" rx="8" fill="#bf8f00" stroke="#d6a300" stroke-width="1.500"/>
<path d="M1170 365.500H1415M1170 402.500H1415" stroke="#ffd500" stroke-width="1.800"/><path d="M1170 365V403M1415 365V403" stroke="#dcae00" stroke-width="1.200"/>
<text x="1293" y="389" style="font-family:'DejaVu Sans',sans-serif;font-size:16px;font-weight:bold;fill:#fbf0c0;text-anchor:middle">طلب شراء</text>

<!-- row headers right -->
<rect x="1680" y="286" width="20" height="620" fill="#fff"/>
<rect x="1680" y="682.500" width="20" height="41" fill="#dcdcdc"/><rect x="1680" y="682.500" width="2.500" height="41" fill="#217346"/>
<path d="M1680.500 264V906" stroke="#c4c4c4"/>
<path d="M1681 308.500H1700M1681 342.500H1700M1681 377.500H1700M1681 415.500H1700M1681 480.500H1700M1681 521H1700M1681 561.500H1700M1681 602H1700M1681 642.500H1700M1681 682.500H1700M1681 723H1700M1681 763.500H1700M1681 804H1700M1681 844.500H1700M1681 884.500H1700" stroke="#dedede"/>
<text class="q" x="1692" y="303">1</text><text class="q" x="1692" y="337">2</text><text class="q" x="1692" y="372">3</text><text class="q" x="1692" y="410">4</text><text class="q" x="1692" y="475">5</text>
<text class="q" x="1684.500" y="516">222</text><text class="q" x="1684.500" y="556">223</text><text class="q" x="1684.500" y="597">224</text><text class="q" x="1684.500" y="637">225</text><text class="q" x="1684.500" y="677">226</text><text class="q" x="1684.500" y="718" style="fill:#217346">227</text><text class="q" x="1684.500" y="758">228</text><text class="q" x="1684.500" y="799">229</text><text class="q" x="1684.500" y="839">230</text><text class="q" x="1684.500" y="879">231</text>

<!-- sheet tab bar -->
<rect x="0" y="906" width="1700" height="35" fill="#f6f6f6"/>
<path d="M0 906.500H1176M1304 906.500H1700" stroke="#c4c4c4"/>
<rect x="16.500" y="914.500" width="265" height="19" fill="#e6e6e6"/>
<rect x="16.500" y="914.500" width="19" height="19" fill="#fff" stroke="#aaa"/><path d="M29 919.500v9l-6-4.500z" fill="#666"/>
<rect x="241.500" y="914.500" width="21" height="19" fill="#fff" stroke="#aaa"/>
<rect x="262.500" y="914.500" width="19" height="19" fill="#fff" stroke="#aaa"/><path d="M269 919.500v9l6-4.500z" fill="#666"/>
<path d="M302 917v2.500M302 922.500v2.500M302 928v2.500" stroke="#999" stroke-width="2"/>
<circle cx="881.500" cy="923" r="9" fill="none" stroke="#8a8a8a" stroke-width="1.400"/><path d="M876 923h11M881.500 917.500v11" stroke="#777" stroke-width="2"/>
<path d="M936.500 911V936M1013.500 911V936M1094.500 911V936M1422.500 911V936M1503.500 911V936M1585.500 911V936" stroke="#bdbdbd"/>
<text x="975.500" y="928" style="font-family:'DejaVu Sans',sans-serif;font-size:13.500px;fill:#444;text-anchor:middle">الاهلاك</text>
<text x="1055.500" y="928" style="font-family:'DejaVu Sans',sans-serif;font-size:13.500px;fill:#444;text-anchor:middle">صلاحية</text>
<text class="t" x="1113" y="928.500" textLength="48" lengthAdjust="spacingAndGlyphs">Sheet1</text>
<rect x="1176" y="905" width="128" height="32" fill="#fff"/><rect x="1176" y="935" width="128" height="2.500" fill="#217346"/><rect x="1176" y="908" width="1" height="28" fill="#217346"/>
<text x="1242" y="928" style="font-family:'DejaVu Sans',sans-serif;font-size:13.500px;fill:#217346;text-anchor:middle">تقرير المخزون</text>
<text x="1364.500" y="928" style="font-family:'DejaVu Sans',sans-serif;font-size:13.500px;fill:#444;text-anchor:middle">حركة المخزن</text>
<text class="t" x="1440" y="928.500" textLength="48" lengthAdjust="spacingAndGlyphs">Sheet5</text>
<text class="t" x="1522.500" y="928.500" textLength="48" lengthAdjust="spacingAndGlyphs">Sheet2</text>
<path d="M1641 917v12l-6-6zM1671 917v12l6-6z" fill="#d0d0d0"/>

<!-- status bar -->
<rect x="0" y="941" width="1700" height="27" fill="#217346"/>
<rect x="0" y="968" width="1700" height="2" fill="#67807a"/>
<text x="0" y="960" font-size="14" fill="#e4efe9" textLength="38" lengthAdjust="spacingAndGlyphs">READY</text>
<circle cx="66" cy="948.500" r="3.500" fill="#fff"/><rect x="64.500" y="950.500" width="15" height="13" fill="none" stroke="#e4efe9" stroke-width="1.200"/><rect x="69" y="947" width="11" height="4" fill="#e4efe9"/><path d="M67 954.500h10M67 958h10M67 961.500h10M70 952v10M74 952v10" stroke="#e4efe9" stroke-width=".8"/>
<rect x="1341" y="941" width="47" height="27" fill="#125c36"/>
<path d="M1355.500 947.500h16v15h-16zM1361 948v14M1366 948v14M1356 952.500h15M1356 957.500h15" fill="none" stroke="#eef5f1" stroke-width="1.200"/>
<rect x="1403" y="947.500" width="17.500" height="15" fill="none" stroke="#e4efe9" stroke-width="1.400"/><path d="M1408 950h7.500v10H1408zM1410 953h3.500M1410 956h3.500" fill="none" stroke="#e4efe9"/>
<rect x="1451.500" y="947.500" width="17" height="15" fill="none" stroke="#e4efe9" stroke-width="1.400"/><path d="M1454 948h5v7h-5zM1461 948h4v5h-4z" fill="#e4efe9"/>
<rect x="1490" y="953" width="7" height="2.500" fill="#eef5f1"/>
<rect x="1502.500" y="953.500" width="126.500" height="1" fill="#cfe0d7"/>
<rect x="1557" y="948" width="5" height="13" fill="#eef5f1"/><rect x="1566.500" y="951" width="1" height="7" fill="#cfe0d7"/>
<path d="M1634 954.500h11M1639.500 949v11" stroke="#eef5f1" stroke-width="2.500"/>
<text x="1663" y="960" font-size="14" fill="#e4efe9" textLength="31" lengthAdjust="spacingAndGlyphs">90 %</text>

<!-- watermark -->
<text x="849" y="949" style="font-family:'DejaVu Sans',sans-serif;font-size:56px;fill:#b9b9b9;fill-opacity:.5;text-anchor:middle" textLength="205" lengthAdjust="spacingAndGlyphs">خمسات</text>
</svg>
</body></html>
